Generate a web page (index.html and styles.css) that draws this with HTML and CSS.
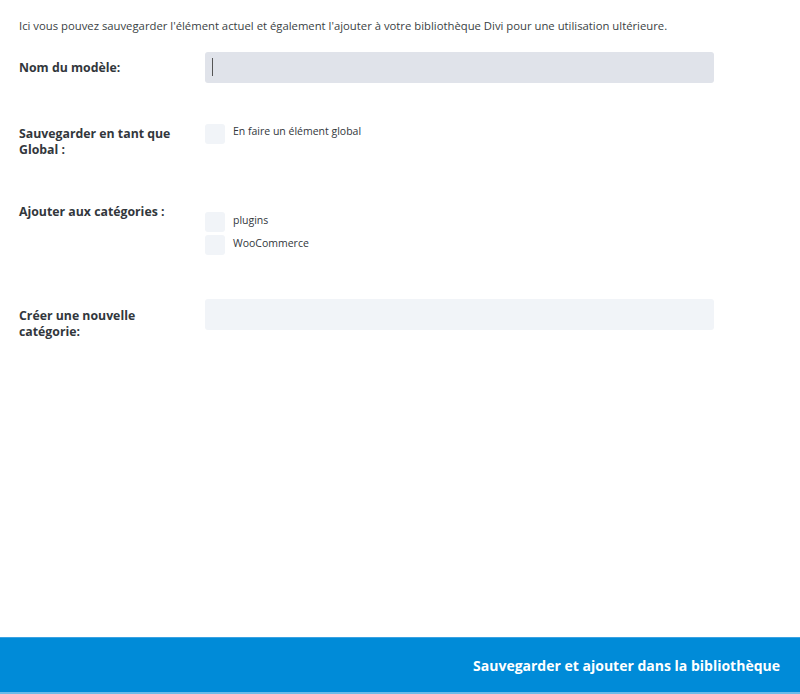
FILE: index.html
```html
<!DOCTYPE html>
<html lang="fr">
<head>
    <meta charset="UTF-8">
    <meta name="viewport" content="width=device-width, initial-scale=1.0">
    <title>Sauvegarder dans la bibliothèque</title>
    <link rel="stylesheet" href="styles.css">
</head>
<body>
    <div class="content">
        <p class="intro">Ici vous pouvez sauvegarder l'élément actuel et également l'ajouter à votre bibliothèque Divi pour une utilisation ultérieure.</p>

        <div class="row row-name">
            <label class="row-label" for="templateName">Nom du modèle:</label>
            <div class="row-field">
                <div class="input-wrap focused">
                    <input type="text" id="templateName" class="text-input">
                </div>
            </div>
        </div>

        <div class="row row-global">
            <div class="row-label">Sauvegarder en tant que Global :</div>
            <div class="row-field">
                <label class="check"><span class="box"></span>En faire un élément global</label>
            </div>
        </div>

        <div class="row row-cats">
            <div class="row-label">Ajouter aux catégories :</div>
            <div class="row-field check-list">
                <label class="check"><span class="box"></span>plugins</label>
                <label class="check"><span class="box"></span>WooCommerce</label>
            </div>
        </div>

        <div class="row row-new">
            <label class="row-label" for="newCategory">Créer une nouvelle catégorie:</label>
            <div class="row-field">
                <input type="text" id="newCategory" class="text-input">
            </div>
        </div>
    </div>

    <div class="footer">
        <button type="button" class="save-btn">Sauvegarder et ajouter dans la bibliothèque</button>
    </div>
</body>
</html>
```

FILE: styles.css
```css
html, body {
    height: 100%;
}
body {
    margin: 0;
    font-family: "Open Sans", "Liberation Sans", sans-serif;
    color: #32373c;
    background: #fff;
    display: flex;
    flex-direction: column;
}
.content {
    padding: 17px 19px 0;
}
.intro {
    margin: 0;
    font-size: 11.3px;
    line-height: 18px;
    color: #3a3f44;
}
.row {
    display: flex;
}
.row-label {
    width: 186px;
    box-sizing: border-box;
    padding-right: 16px;
    flex-shrink: 0;
    font-size: 12.3px;
    font-weight: 700;
    line-height: 16px;
    color: #32373c;
}
.row-field {
    width: 509px;
}
.row-name {
    margin-top: 17px;
}
.row-name .row-label {
    padding-top: 8px;
}
.row-global {
    margin-top: 40px;
}
.row-global .row-label {
    padding-top: 3px;
}
.row-global .row-field {
    padding-top: 1px;
}
.row-cats {
    margin-top: 45px;
}
.row-cats .row-label {
    padding-top: 1px;
}
.row-cats .row-field {
    padding-top: 9px;
}
.row-new {
    margin-top: 44px;
}
.row-new .row-label {
    padding-top: 9px;
}
.text-input {
    display: block;
    width: 100%;
    height: 31px;
    box-sizing: border-box;
    border: none;
    border-radius: 3px;
    background: #f1f4f8;
    padding: 0 8px;
    font: inherit;
    outline: none;
}
.input-wrap {
    position: relative;
}
.focused .text-input {
    background: #e0e3ea;
}
.focused::after {
    content: "";
    position: absolute;
    left: 7px;
    top: 6px;
    width: 1px;
    height: 18px;
    background: #555;
}
.check-list {
    display: flex;
    flex-direction: column;
    gap: 3px;
}
.check {
    display: flex;
    align-items: flex-start;
    font-size: 10.5px;
    line-height: 14px;
    color: #32373c;
}
.check .box {
    width: 20px;
    height: 20px;
    border-radius: 3px;
    background: #f1f4f8;
    margin-right: 8px;
    flex-shrink: 0;
}
.row-cats .check {
    line-height: 16px;
}
.footer {
    margin-top: auto;
    margin-bottom: 2px;
    height: 55px;
    background: #008bd8;
    border-top: 1px solid #3aa2e2;
    box-sizing: border-box;
    display: flex;
    justify-content: flex-end;
    align-items: center;
    box-shadow: 0 2px 0 #6bbbe9;
}
.save-btn {
    background: none;
    border: none;
    color: #fff;
    font-family: inherit;
    font-size: 14px;
    font-weight: 700;
    padding: 0 20px 0 0;
    cursor: pointer;
}
```
